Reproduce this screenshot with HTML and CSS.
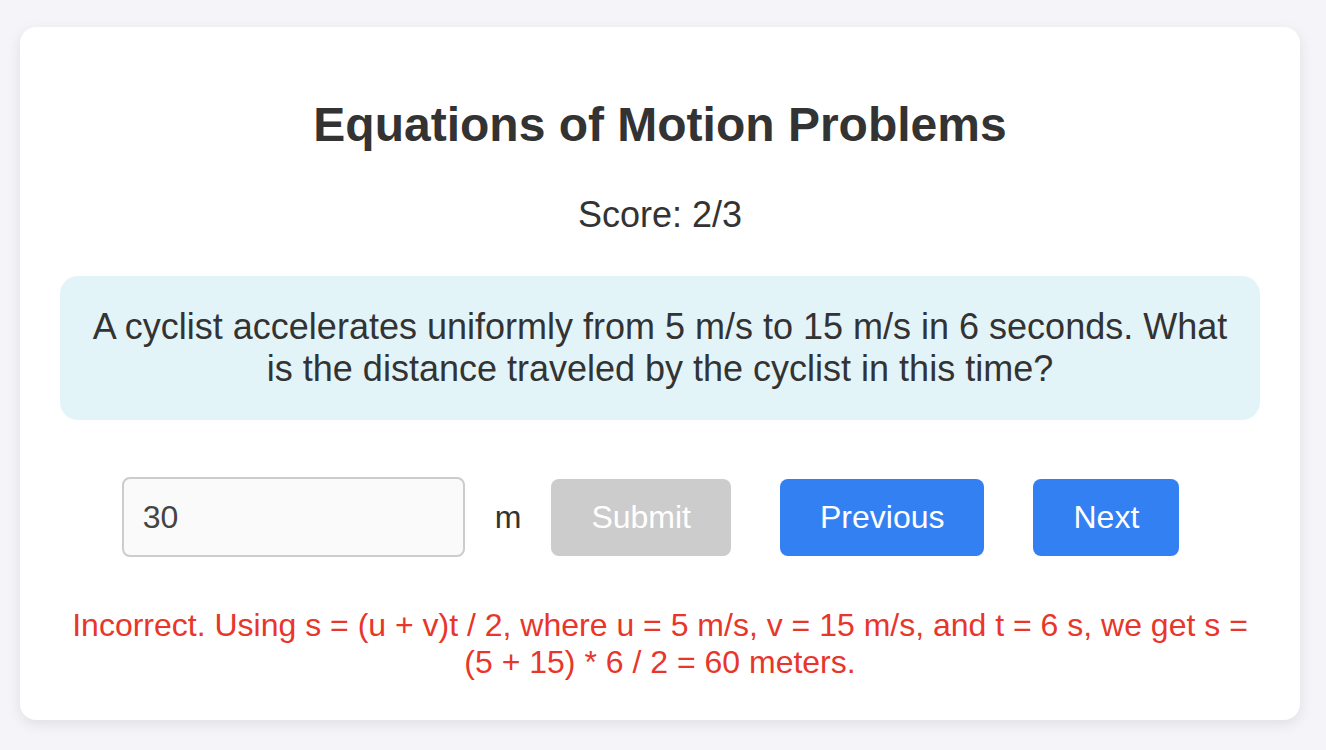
FILE: index.html
```html
<!DOCTYPE html>
<html lang="en">
<head>
<meta charset="utf-8">
<title>Equations of Motion Problems</title>
<link rel="stylesheet" href="styles.css">
</head>
<body>
<main class="card">
  <h1 class="title">Equations of Motion Problems</h1>
  <div class="score">Score: 2/3</div>
  <div class="question">A cyclist accelerates uniformly from 5 m/s to 15 m/s in 6 seconds. What is the distance traveled by the cyclist in this time?</div>
  <div class="answer-row">
    <input class="answer-input" type="text" value="30">
    <span class="unit">m</span>
    <button class="btn btn-disabled" disabled>Submit</button>
    <button class="btn btn-primary btn-spaced">Previous</button>
    <button class="btn btn-primary btn-spaced">Next</button>
  </div>
  <div class="feedback">Incorrect. Using s = (u + v)t / 2, where u = 5 m/s, v = 15 m/s, and t = 6 s, we get s = (5 + 15) * 6 / 2 = 60 meters.</div>
</main>
</body>
</html>
```
FILE: styles.css
```css
html, body {
  margin: 0;
  background: #f4f4f9;
}
body {
  padding: 27px 20px 30px 20px;
  font-family: "Liberation Sans", Arial, Helvetica, sans-serif;
  color: #333;
}
.card {
  box-sizing: border-box;
  width: 1280px;
  background: #fff;
  border-radius: 16px;
  box-shadow: 0 4px 14px rgba(0, 0, 0, 0.09);
  padding: 40px 40px 39px;
  text-align: center;
}
.title {
  margin: 30px 0 42px;
  font-size: 48px;
  font-weight: bold;
  line-height: normal;
  color: #333;
}
.score {
  font-size: 36px;
  margin-bottom: 40px;
}
.question {
  background: #e3f4f9;
  border-radius: 18px;
  padding: 30px 20px;
  font-size: 36px;
  line-height: normal;
  margin-bottom: 57px;
}
.answer-row {
  display: flex;
  align-items: center;
  justify-content: center;
  gap: 30px;
  padding-right: 19px;
  margin-bottom: 50px;
}
.answer-input {
  box-sizing: border-box;
  width: 343px;
  height: 80px;
  padding: 0 19px;
  border: 2px solid #ccc;
  border-radius: 8px;
  background: #fafafa;
  font-family: "Liberation Sans", Arial, Helvetica, sans-serif;
  font-size: 32px;
  color: #444;
  outline: none;
}
.unit {
  font-size: 32px;
  color: #333;
}
.btn {
  font-family: "Liberation Sans", Arial, Helvetica, sans-serif;
  font-size: 32px;
  line-height: normal;
  padding: 20px 40px;
  border: none;
  border-radius: 8px;
  color: #fff;
}
.btn-disabled {
  background: #cccccc;
}
.btn-primary {
  background: #3380f2;
}
.btn-spaced {
  margin-left: 19px;
}
.feedback {
  font-size: 32px;
  line-height: normal;
  color: #e8362a;
}
```
